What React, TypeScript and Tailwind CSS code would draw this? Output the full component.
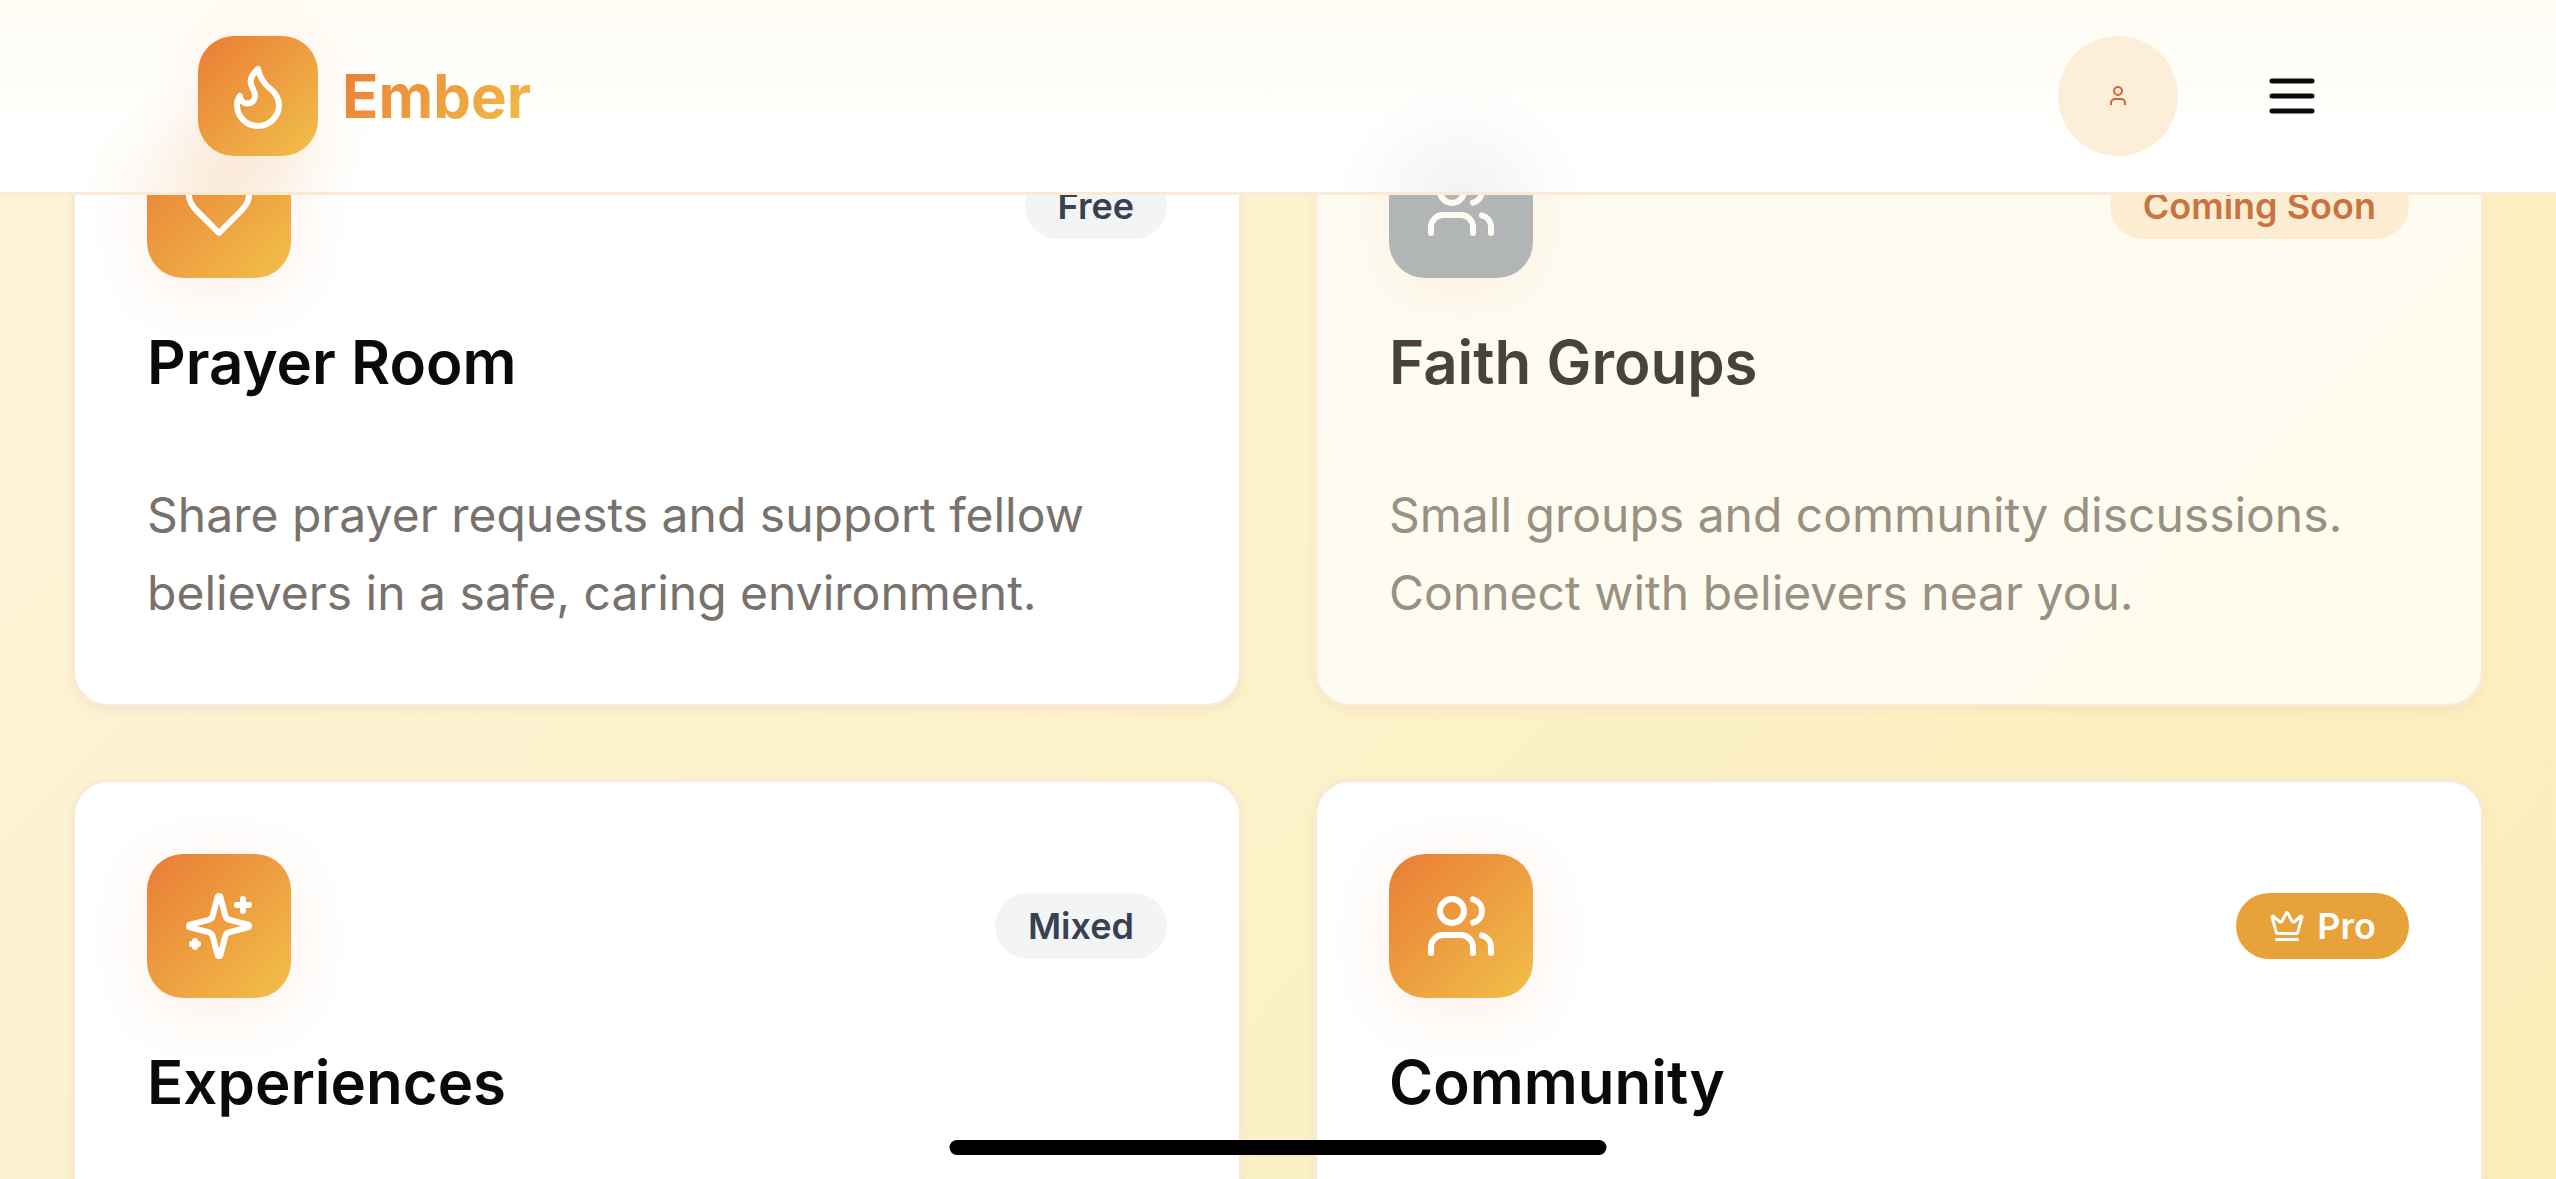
import React from "react";
import { Crown, Users } from "lucide-react";

type IconProps = { className?: string };

const badgeStyles = {
  neutral: "bg-gray-100 text-[#374151]",
  soon: "bg-[#feedd5] text-[#b84a16]",
  pro: "bg-[#e8a23a] text-white",
};

type Feature = {
  title: string;
  text?: string;
  badge: string;
  tone: keyof typeof badgeStyles;
  icon: React.ComponentType<IconProps>;
  muted?: boolean;
};

const features: Feature[] = [
  {
    title: "Prayer Room",
    text: "Share prayer requests and support fellow believers in a safe, caring environment.",
    badge: "Free",
    tone: "neutral",
    icon: HeartIcon,
  },
  {
    title: "Faith Groups",
    text: "Small groups and community discussions. Connect with believers near you.",
    badge: "Coming Soon",
    tone: "soon",
    icon: Users,
    muted: true,
  },
  { title: "Experiences", badge: "Mixed", tone: "neutral", icon: SparklesIcon },
  { title: "Community", badge: "Pro", tone: "pro", icon: Users },
];

function LineIcon({ className, children }: IconProps & { children: React.ReactNode }) {
  return (
    <svg
      viewBox="0 0 24 24"
      className={className}
      fill="none"
      stroke="currentColor"
      strokeWidth={2}
      strokeLinecap="round"
      strokeLinejoin="round"
      aria-hidden="true"
    >
      {children}
    </svg>
  );
}

function FlameIcon({ className }: IconProps) {
  return (
    <LineIcon className={className}>
      <path d="M8.5 14.5A2.5 2.5 0 0 0 11 12c0-1.38-.5-2-1-3-1.072-2.143-.224-4.054 2-6 .5 2.5 2 4.9 4 6.5 2 1.6 3 3.5 3 5.5a7 7 0 1 1-14 0c0-1.153.433-2.294 1-3a2.5 2.5 0 0 0 2.5 2.5z" />
    </LineIcon>
  );
}

function HeartIcon({ className }: IconProps) {
  return (
    <LineIcon className={className}>
      <path d="M19 14c1.49-1.46 3-3.21 3-5.5A5.5 5.5 0 0 0 16.5 3c-1.76 0-3 .5-4.5 2-1.5-1.5-2.74-2-4.5-2A5.5 5.5 0 0 0 2 8.5c0 2.3 1.5 4.05 3 5.5l7 7Z" />
    </LineIcon>
  );
}

function SparklesIcon({ className }: IconProps) {
  return (
    <LineIcon className={className}>
      <path d="M9.937 15.5A2 2 0 0 0 8.5 14.063l-6.135-1.582a.5.5 0 0 1 0-.962L8.5 9.936A2 2 0 0 0 9.937 8.5l1.582-6.135a.5.5 0 0 1 .963 0L14.063 8.5A2 2 0 0 0 15.5 9.937l6.135 1.581a.5.5 0 0 1 0 .964L15.5 14.063a2 2 0 0 0-1.437 1.437l-1.582 6.135a.5.5 0 0 1-.963 0z" />
      <path d="M20 3v4M22 5h-4M4 17v2M5 18H3" />
    </LineIcon>
  );
}

function MenuIcon({ className }: IconProps) {
  return (
    <LineIcon className={className}>
      <path d="M4 6h16M4 12h16M4 18h16" />
    </LineIcon>
  );
}

function UserIcon() {
  return (
    <svg
      viewBox="0 0 24 24"
      className="size-6"
      fill="none"
      stroke="currentColor"
      strokeWidth={2}
      aria-hidden="true"
    >
      <path d="M19 21v-2a4 4 0 0 0-4-4H9a4 4 0 0 0-4 4v2" />
      <circle cx="12" cy="7" r="4" />
    </svg>
  );
}

// Frosted bar: a warm top edge plus soft glows above the first row's icon tiles.
const frost =
  "bg-[radial-gradient(140px_120px_at_219px_100%,rgba(236,165,85,0.2),rgba(238,165,95,0.12)_40%,rgba(240,160,100,0.03)_75%,transparent),radial-gradient(130px_110px_at_calc(50%_+_183px)_100%,rgba(145,152,155,0.12),rgba(145,152,155,0.07)_40%,rgba(145,152,155,0.02)_75%,transparent),linear-gradient(to_bottom,#fffcf5,#fffdf9_30%,#fffffd_60%,#fffffe)]";

function Header() {
  return (
    <header className={`fixed inset-x-0 top-0 z-10 border-b-3 border-[#fbead6] bg-origin-border ${frost}`}>
      <div className="flex items-center justify-between px-[198px] py-9">
        <a href="#home" className="flex items-center gap-6">
          <span className="flex size-[120px] items-center justify-center rounded-[36px] bg-[linear-gradient(135deg,#e97c36,#f1c04a)] text-white shadow-[0_12px_60px_rgba(233,124,54,0.12)]">
            <FlameIcon className="size-[72px]" />
          </span>
          <span className="bg-[linear-gradient(135deg,#e97c36,#f1c04a)] bg-clip-text text-[60px] leading-[84px] font-bold text-transparent">
            Ember
          </span>
        </a>
        <div className="flex items-center gap-12">
          <button
            type="button"
            aria-label="Account"
            className="flex size-[120px] items-center justify-center rounded-full bg-[#fdeeda] text-[#d9602b]"
          >
            <UserIcon />
          </button>
          <button type="button" aria-label="Open menu" className="px-9 py-6">
            <MenuIcon className="size-[60px]" />
          </button>
        </div>
      </div>
    </header>
  );
}

function FeatureCard({ title, text, badge, tone, icon: Icon, muted }: Feature) {
  return (
    <article
      className={`min-h-[648px] rounded-[36px] border-3 border-[#fbe9d7] bg-white p-[72px] shadow-[0_3px_9px_rgba(0,0,0,0.05)] ${
        muted ? "opacity-75" : ""
      }`}
    >
      <div className="flex items-center justify-between">
        <span
          className={`flex size-36 items-center justify-center rounded-[36px] text-white shadow-[0_12px_60px_rgba(233,124,54,0.12)] ${
            muted ? "bg-gray-400" : "bg-[linear-gradient(135deg,#e97c36,#f1c04a)]"
          }`}
        >
          <Icon className="size-[72px]" />
        </span>
        <span
          className={`flex items-center gap-3 rounded-full px-[33px] py-[9px] text-4xl leading-[48px] font-semibold ${badgeStyles[tone]}`}
        >
          {tone === "pro" && <Crown className="size-9" />}
          {badge}
        </span>
      </div>
      <h2 className="mt-12 text-[60px] leading-[72px] font-semibold">{title}</h2>
      {text && (
        <p className="mt-[78px] text-5xl leading-[78px] text-[#78716c]">{text}</p>
      )}
    </article>
  );
}

export default function App() {
  return (
    <div className="h-screen overflow-hidden bg-[linear-gradient(135deg,#fdf4d9,#fbeeba)] font-['Inter',sans-serif] text-[#0a0a09]">
      <Header />
      <main className="grid grid-cols-2 gap-[72px] px-[72px] pt-[59px]">
        {features.map((feature) => (
          <FeatureCard key={feature.title} {...feature} />
        ))}
      </main>
      <div className="fixed bottom-6 left-1/2 z-20 h-[15px] w-[657px] -translate-x-1/2 rounded-full bg-black" />
    </div>
  );
}
